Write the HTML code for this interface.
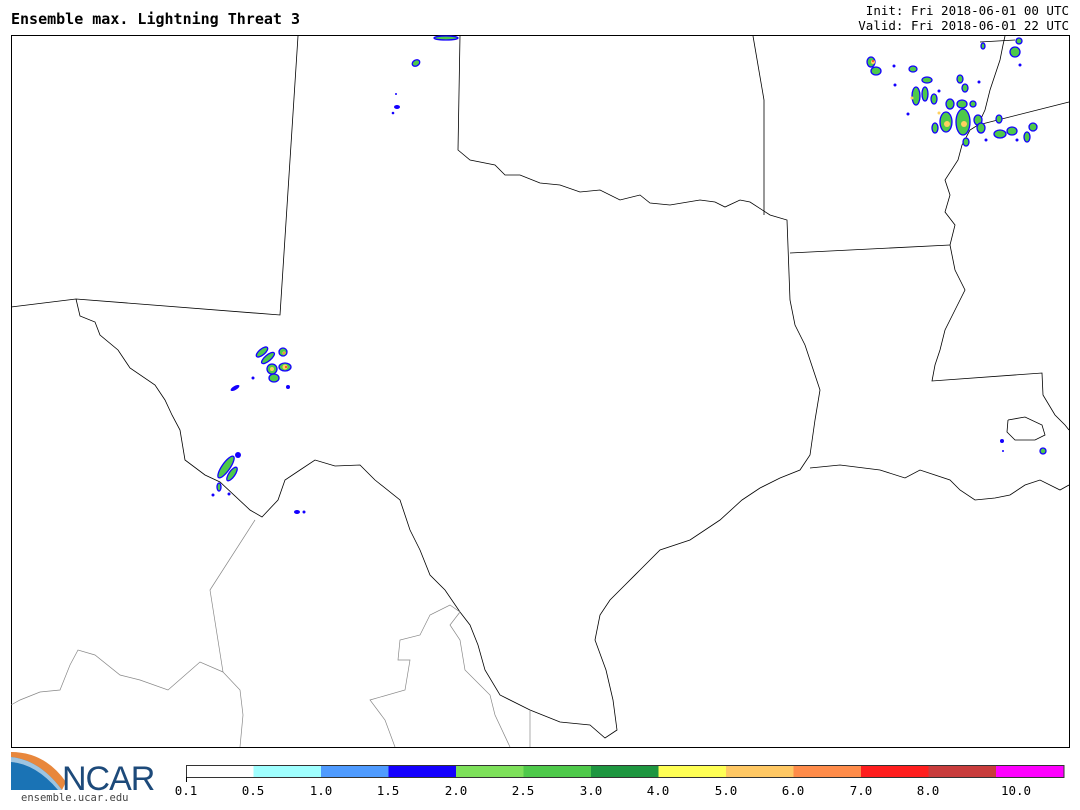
<!DOCTYPE html>
<html><head><meta charset="utf-8"><style>
body{margin:0;width:1080px;height:810px;background:#fff;position:relative;overflow:hidden;font-family:"DejaVu Sans Mono","Liberation Mono",monospace}
.t{position:absolute;white-space:pre;color:#000}
</style></head><body>
<div class="t" style="left:11px;top:10px;font-size:15px;font-weight:bold">Ensemble max. Lightning Threat 3</div>
<div class="t" style="right:11px;top:3px;font-size:12.5px;text-align:right;line-height:15px">Init: Fri 2018-06-01 00 UTC
Valid: Fri 2018-06-01 22 UTC</div>
<svg width="1080" height="810" style="position:absolute;left:0;top:0">
<rect x="11.5" y="35.5" width="1058" height="712" fill="none" stroke="#000" stroke-width="1"/>
<g fill="none" stroke="#000" stroke-width="0.8">
<polyline points="298,36 280,315 76,299 11,307"/>
<polyline points="76,299 80,316 95,322 100,335 118,350 130,368 155,385 165,400 172,415 180,430 185,460 205,475 220,482 250,510 262,517 278,500 285,480 300,470 315,460 335,466 360,465 375,480 400,500 410,530 420,550 430,575 445,590 460,612 470,625 478,645 485,670 500,695 530,710 560,722 590,725 605,738 617,730 613,700 606,670 595,640 600,615 610,600 625,585 640,570 660,550 690,540 720,520 742,500 760,488 780,478 800,470 810,455 815,420 820,390 805,345 795,325 790,300 787,220 770,215 750,202 740,200 725,207 715,202 700,200 670,205 650,203 640,195 620,200 600,190 580,192 560,185 540,183 520,175 505,175 495,165 470,160 458,150 460,36"/>
<polyline points="753,36 764,100 764,215"/>
<polyline points="790,253 950,245"/>
<polyline points="980,42 1015,40"/>
<polyline points="950,245 955,225 945,212 950,195 945,180 958,160 962,145 970,130 978,125 985,110 990,90 995,75 1000,60 1003,45 1005,36"/>
<polyline points="978,125 1069,102"/>
<polyline points="950,245 955,270 965,290 955,310 945,330 940,350 935,365 932,381 1042,373 1043,395 1055,415 1065,425 1069,430"/>
<polyline points="810,468 840,465 880,470 905,478 920,470 935,475 950,480 960,490 975,500 995,498 1010,495 1025,485 1040,480 1060,490 1069,485"/>
<polyline points="1008,420 1025,417 1042,425 1045,435 1035,440 1015,440 1007,432 1008,420"/>
</g>
<g fill="none" stroke="#888" stroke-width="0.7">
<polyline points="255,520 210,590 223,672 200,662 168,690 140,680 120,675 95,655 78,650 70,665 60,690 40,692 20,700 11,705"/>
<polyline points="223,672 240,690 243,715 240,747"/>
<polyline points="530,710 530,747"/>
<polyline points="460,612 450,605 430,615 420,635 400,640 398,660 410,660 405,690 370,700 385,720 395,747"/>
<polyline points="460,612 450,625 460,640 465,670 480,685 490,695 495,715 510,747"/>
</g>
<g fill="#4ec94a" stroke="#1400ff" stroke-width="1.3">
<ellipse cx="871" cy="62" rx="4" ry="5"/><ellipse cx="876" cy="71" rx="5" ry="4"/><ellipse cx="913" cy="69" rx="4" ry="3"/>
<ellipse cx="916" cy="96" rx="4" ry="9"/><ellipse cx="925" cy="94" rx="3" ry="7"/><ellipse cx="934" cy="99" rx="3" ry="5"/>
<ellipse cx="927" cy="80" rx="5" ry="3"/><ellipse cx="960" cy="79" rx="3" ry="4"/><ellipse cx="965" cy="88" rx="3" ry="4"/>
<ellipse cx="950" cy="104" rx="4" ry="5"/><ellipse cx="962" cy="104" rx="5" ry="4"/><ellipse cx="973" cy="104" rx="3" ry="3"/>
<ellipse cx="946" cy="122" rx="6" ry="10"/><ellipse cx="963" cy="122" rx="7" ry="13"/><ellipse cx="978" cy="120" rx="4" ry="5"/>
<ellipse cx="981" cy="128" rx="4" ry="5"/><ellipse cx="999" cy="119" rx="3" ry="4"/><ellipse cx="1000" cy="134" rx="6" ry="4"/>
<ellipse cx="1012" cy="131" rx="5" ry="4"/><ellipse cx="1033" cy="127" rx="4" ry="4"/><ellipse cx="1027" cy="137" rx="3" ry="5"/>
<ellipse cx="966" cy="142" rx="3" ry="4"/><ellipse cx="1015" cy="52" rx="5" ry="5"/><ellipse cx="1019" cy="41" rx="3" ry="3"/>
<ellipse cx="983" cy="46" rx="2" ry="3"/><ellipse cx="935" cy="128" rx="3" ry="5"/>
<ellipse cx="262" cy="352" rx="7" ry="3" transform="rotate(-40 262 352)"/>
<ellipse cx="268" cy="358" rx="8" ry="3" transform="rotate(-40 268 358)"/>
<ellipse cx="283" cy="352" rx="4" ry="4"/><ellipse cx="285" cy="367" rx="6" ry="4"/>
<ellipse cx="272" cy="369" rx="5" ry="5"/><ellipse cx="274" cy="378" rx="5" ry="4"/>
<ellipse cx="226" cy="467" rx="4" ry="13" transform="rotate(35 226 467)"/>
<ellipse cx="232" cy="474" rx="3" ry="8" transform="rotate(35 232 474)"/>
<ellipse cx="219" cy="487" rx="2" ry="4"/><ellipse cx="416" cy="63" rx="4" ry="3" transform="rotate(-30 416 63)"/>
<ellipse cx="446" cy="38" rx="12" ry="2"/><ellipse cx="1043" cy="451" rx="3" ry="3"/>
</g>
<g fill="#1400ff">
<ellipse cx="235" cy="388" rx="5" ry="2" transform="rotate(-30 235 388)"/><circle cx="288" cy="387" r="2"/><circle cx="253" cy="378" r="1.5"/>
<circle cx="238" cy="455" r="3"/><circle cx="213" cy="495" r="1.5"/><circle cx="229" cy="494" r="1.5"/>
<ellipse cx="297" cy="512" rx="3" ry="2"/><circle cx="304" cy="512" r="1.5"/>
<ellipse cx="397" cy="107" rx="3" ry="2"/><circle cx="393" cy="113" r="1.3"/><circle cx="396" cy="94" r="1"/>
<circle cx="895" cy="85" r="1.5"/><circle cx="894" cy="66" r="1.5"/><circle cx="908" cy="114" r="1.5"/><circle cx="939" cy="91" r="1.5"/>
<circle cx="979" cy="82" r="1.5"/><circle cx="1002" cy="441" r="2"/><circle cx="1003" cy="451" r="1"/>
<circle cx="1020" cy="65" r="1.5"/><circle cx="1017" cy="140" r="1.5"/><circle cx="986" cy="140" r="1.5"/>
</g>
<g fill="#ffd060">
<circle cx="873" cy="62" r="2"/><circle cx="947" cy="124" r="3"/><circle cx="964" cy="124" r="3"/><circle cx="912" cy="98" r="1.5"/>
<circle cx="284" cy="353" r="1.5"/><circle cx="285" cy="367" r="2.5"/><circle cx="272" cy="369" r="2"/><circle cx="939" cy="113" r="1.5"/>
</g>
<g fill="#ff3020"><circle cx="873" cy="61" r="1"/><circle cx="284" cy="353" r="0.8"/><circle cx="286" cy="367" r="1"/></g>
<g stroke="none">
<rect x="186" y="765" width="67.5" height="12" fill="#fff"/>
<rect x="253.5" y="765" width="67.5" height="12" fill="#a0ffff"/>
<rect x="321" y="765" width="67.5" height="12" fill="#4f9bff"/>
<rect x="388.5" y="765" width="67.5" height="12" fill="#1400ff"/>
<rect x="456" y="765" width="67.5" height="12" fill="#7de05a"/>
<rect x="523.5" y="765" width="67.5" height="12" fill="#4ec94a"/>
<rect x="591" y="765" width="67.5" height="12" fill="#1e9640"/>
<rect x="658.5" y="765" width="67.5" height="12" fill="#ffff55"/>
<rect x="726" y="765" width="67.5" height="12" fill="#ffc864"/>
<rect x="793.5" y="765" width="67.5" height="12" fill="#ff8c4a"/>
<rect x="861" y="765" width="67.5" height="12" fill="#ff1e1e"/>
<rect x="928.5" y="765" width="67.5" height="12" fill="#c83c3c"/>
<rect x="996" y="765" width="68" height="12" fill="#ff00ff"/>
</g>
<rect x="186.5" y="765.5" width="877.5" height="12" fill="none" stroke="#333" stroke-width="1"/>
<g stroke="#000" stroke-width="1"><line x1="186.5" y1="777" x2="186.5" y2="782"/></g>
<g font-family="DejaVu Sans Mono,Liberation Mono,monospace" font-size="12.5" fill="#000" text-anchor="middle">
<text x="186" y="795">0.1</text><text x="253" y="795">0.5</text><text x="321" y="795">1.0</text><text x="388" y="795">1.5</text><text x="456" y="795">2.0</text><text x="523" y="795">2.5</text><text x="591" y="795">3.0</text><text x="658" y="795">4.0</text><text x="726" y="795">5.0</text><text x="793" y="795">6.0</text><text x="861" y="795">7.0</text><text x="928" y="795">8.0</text><text x="1016" y="795">10.0</text>
</g>
<path d="M11,752 Q40,755 62,790 L11,790 Z" fill="#1a73b5"/>
<path d="M11,752 Q45,752 66,782 L62,790 Q40,760 11,757 Z" fill="#e8873c"/>
<path d="M11,757 Q40,760 62,790 L58,790 Q36,764 11,762 Z" fill="#9ec4e0"/>
<text x="62" y="790" font-family="Liberation Sans,sans-serif" font-size="34" fill="#1d4a7a" letter-spacing="-1">NCAR</text>
<text x="21" y="801" font-family="DejaVu Sans Mono,monospace" font-size="10.5" fill="#444">ensemble.ucar.edu</text>
</svg>
</body></html>
